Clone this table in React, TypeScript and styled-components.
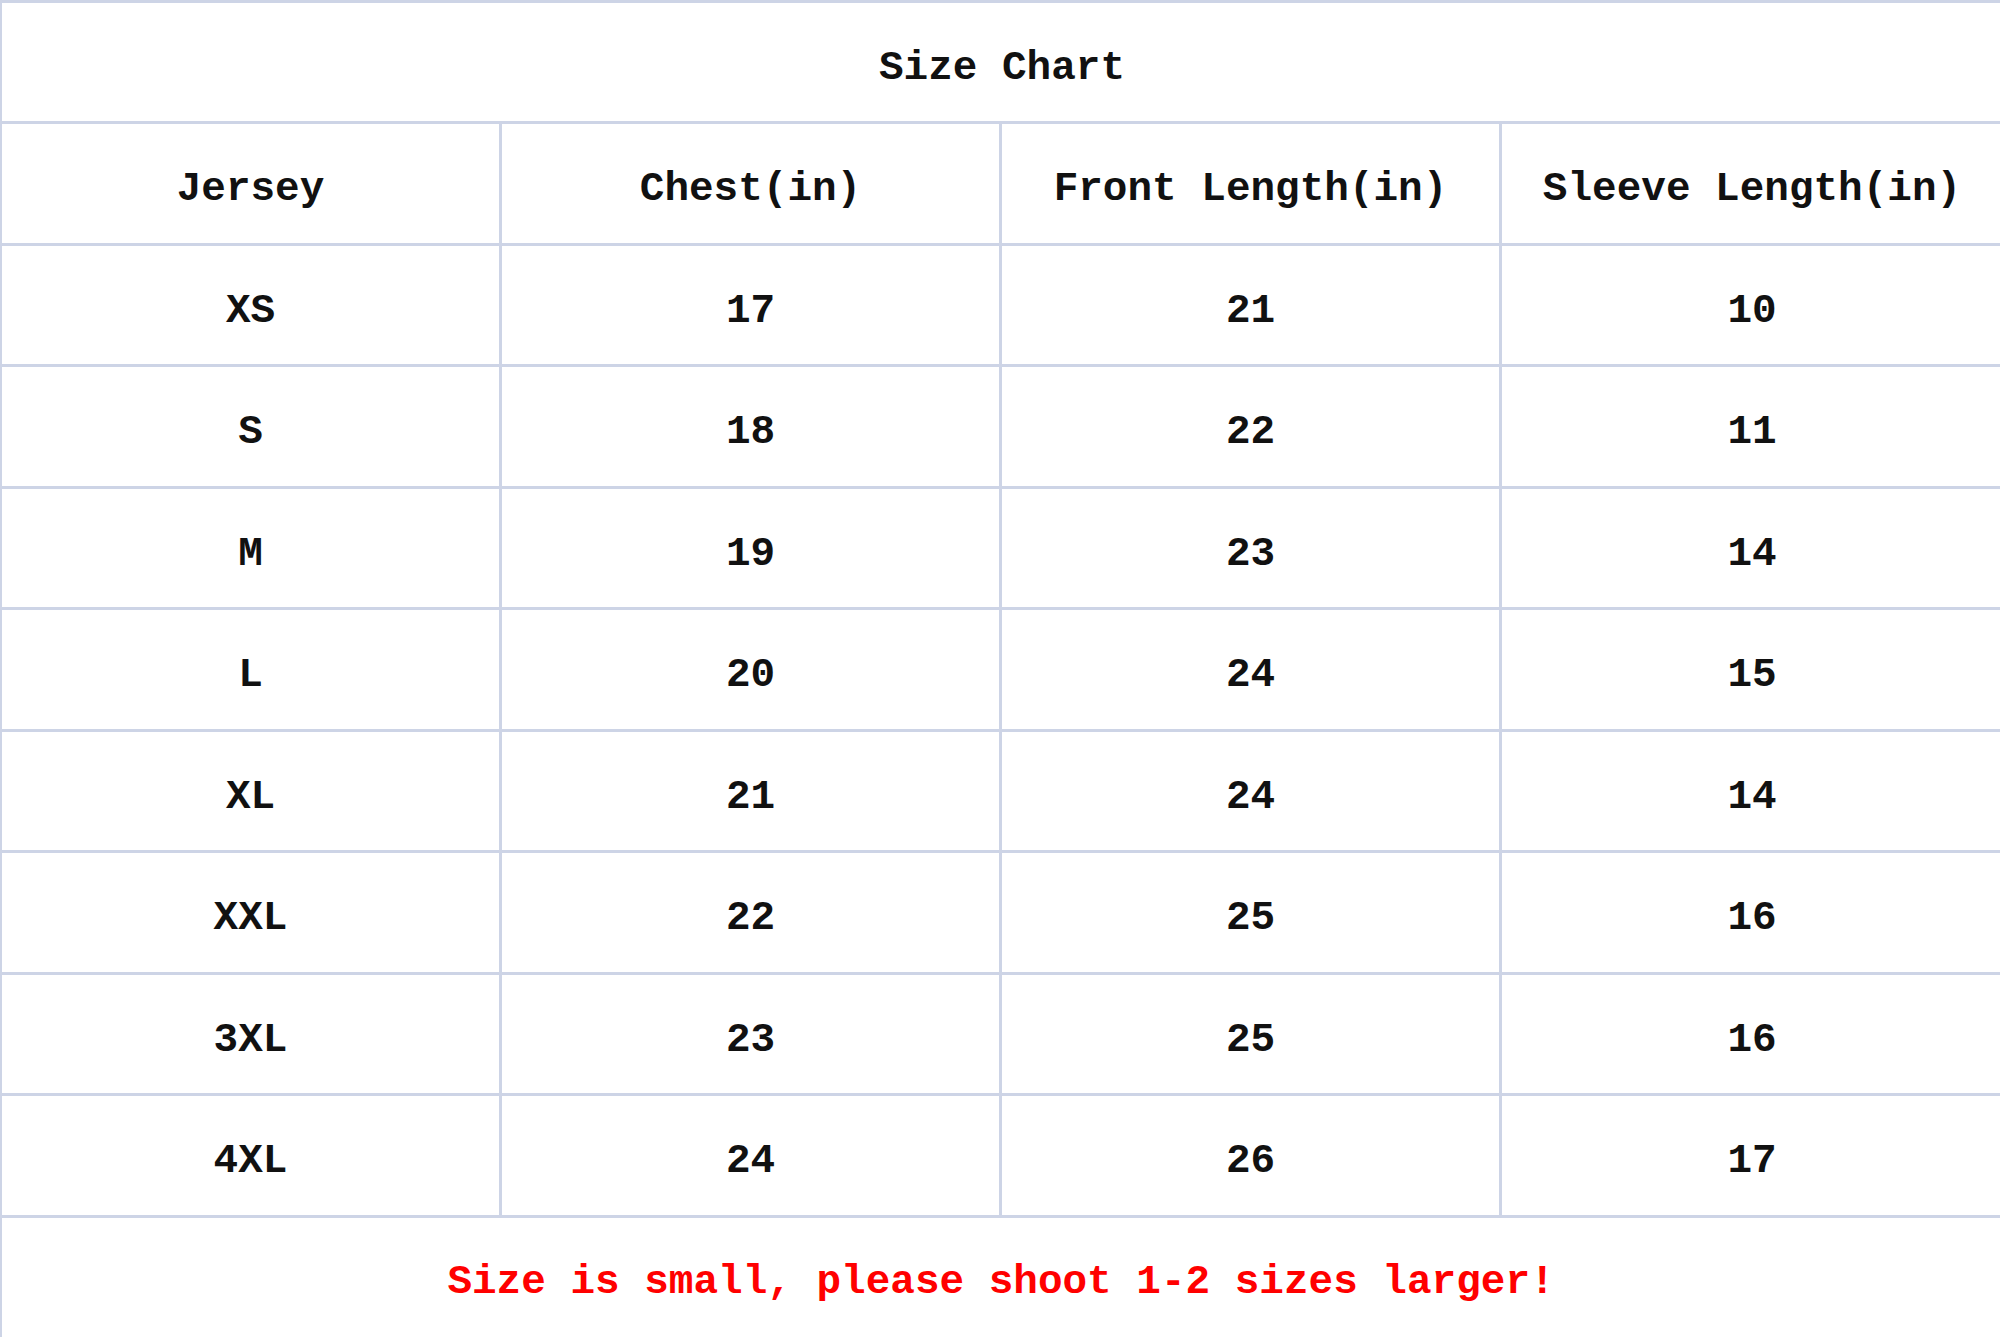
import { FC } from "react";
import styled, { createGlobalStyle } from "styled-components";

const GlobalStyle = createGlobalStyle`
  html, body {
    margin: 0;
    padding: 0;
    background: #ffffff;
    overflow: hidden;
  }
`;

const LINE = "3px solid #cdd4e6";

const Sheet = styled.div`
  display: grid;
  grid-template-columns: repeat(4, 500px);
  width: 2003px;
  border-top: ${LINE};
  border-left: 2px solid #cdd4e6;
  font-family: "Liberation Mono", "DejaVu Sans Mono", monospace;
  font-size: 41px;
  font-weight: 700;
  color: #111111;
`;

const TitleCell = styled.div`
  grid-column: 1 / -1;
  height: 121px;
  box-sizing: border-box;
  padding-top: 12px;
  border-bottom: ${LINE};
  display: flex;
  align-items: center;
  justify-content: center;
`;

const Cell = styled.div<{ $last?: boolean }>`
  height: 121.5px;
  box-sizing: border-box;
  padding-top: 12px;
  border-bottom: ${LINE};
  border-right: ${(p) => (p.$last ? "none" : LINE)};
  display: flex;
  align-items: center;
  justify-content: center;
  white-space: nowrap;
`;

const NoteCell = styled.div`
  grid-column: 1 / -1;
  width: 1998px;
  height: 120px;
  box-sizing: border-box;
  padding-top: 8px;
  display: flex;
  align-items: center;
  justify-content: center;
  color: #ff0000;
  white-space: nowrap;
`;

const headers = ["Jersey", "Chest(in)", "Front Length(in)", "Sleeve Length(in)"];

const rows: string[][] = [
  ["XS", "17", "21", "10"],
  ["S", "18", "22", "11"],
  ["M", "19", "23", "14"],
  ["L", "20", "24", "15"],
  ["XL", "21", "24", "14"],
  ["XXL", "22", "25", "16"],
  ["3XL", "23", "25", "16"],
  ["4XL", "24", "26", "17"],
];

const App: FC = () => {
  return (
    <>
      <GlobalStyle />
      <Sheet>
        <TitleCell>Size Chart</TitleCell>
        {headers.map((h, i) => (
          <Cell key={h} $last={i === headers.length - 1}>
            {h}
          </Cell>
        ))}
        {rows.map((row) =>
          row.map((value, i) => (
            <Cell key={row[0] + i} $last={i === row.length - 1}>
              {value}
            </Cell>
          ))
        )}
        <NoteCell>Size is small, please shoot 1-2 sizes larger!</NoteCell>
      </Sheet>
    </>
  );
};

export default App;
